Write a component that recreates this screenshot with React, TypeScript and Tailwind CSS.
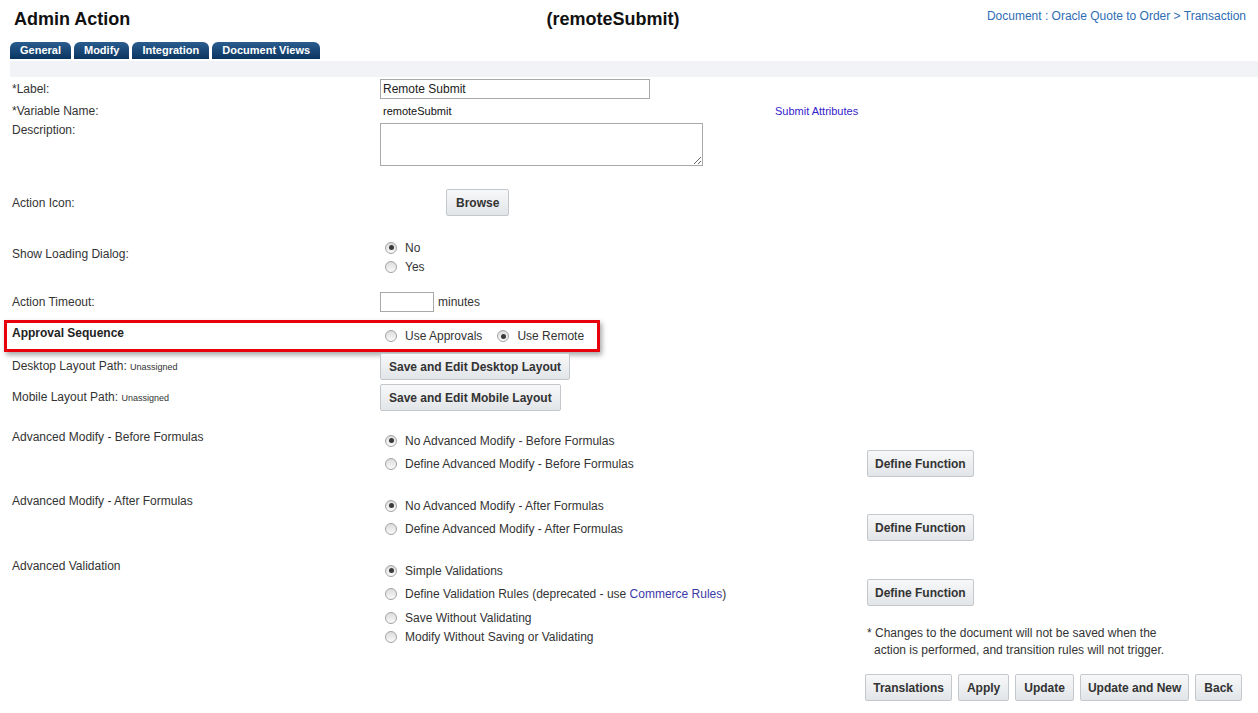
import React from "react";

const tabs = ["General", "Modify", "Integration", "Document Views"];

function Btn({ children, className = "px-[8px]" }: { children: React.ReactNode; className?: string }) {
  return (
    <button
      type="button"
      className={`block h-[27px] rounded-[2px] border border-[#c4c8cd] bg-gradient-to-b from-[#f7f8f9] to-[#e2e5e8] text-[12px] font-bold text-[#333] leading-none whitespace-nowrap ${className}`}
    >
      {children}
    </button>
  );
}

function Radio({ checked, label }: { checked?: boolean; label: React.ReactNode }) {
  return (
    <span className="flex items-center leading-[14px]">
      <span className="ml-[5px] mr-[8px] w-[12px] h-[12px] rounded-full border border-[#a3a3a3] bg-gradient-to-b from-[#dcdcdc] to-[#fafafa] flex items-center justify-center shrink-0">
        {checked && <span className="w-[5px] h-[5px] rounded-full bg-[#3a3a3a]" />}
      </span>
      <span className="text-[12px] text-[#333]">{label}</span>
    </span>
  );
}

function Label({ children, className = "" }: { children: React.ReactNode; className?: string }) {
  return <div className={`pl-[12px] text-[12px] leading-[14px] text-[#333] ${className}`}>{children}</div>;
}

export default function App() {
  return (
    <div className="w-[1258px] h-[713px] bg-white overflow-hidden font-['Liberation_Sans',Arial,sans-serif] text-[#333] leading-[14px]">
      {/* Header */}
      <div className="grid grid-cols-[520px_186px_1fr] h-[42px]">
        <h1 className="pl-[14px] pt-[8px] text-[18px] leading-[22px] font-bold text-[#111]">Admin Action</h1>
        <div className="pt-[8px] text-center text-[18px] leading-[22px] font-bold text-[#111]">(remoteSubmit)</div>
        <div className="pt-[8px] pr-[12px] text-right text-[12px] leading-[16px] text-[#2e6db4]">
          Document : Oracle Quote to Order &gt; Transaction
        </div>
      </div>

      {/* Tabs */}
      <div className="flex gap-[3px] pl-[10px] h-[17px]">
        {tabs.map((t) => (
          <div
            key={t}
            className="px-[10px] rounded-t-[6px] bg-gradient-to-b from-[#2a5d8f] to-[#0a3561] text-white text-[11px] font-bold leading-[17px]"
          >
            {t}
          </div>
        ))}
      </div>
      <div className="ml-[10px] mt-[2px] h-[16px] bg-[#f2f3f7]" />

      {/* Label */}
      <div className="grid grid-cols-[380px_1fr] mt-[2px] items-center">
        <Label>*Label:</Label>
        <div className="flex">
          <input
            defaultValue="Remote Submit"
            className="block w-[270px] h-[20px] border border-[#a9a9a9] px-[2px] text-[12px] text-[#222] outline-none"
          />
        </div>
      </div>

      {/* Variable name */}
      <div className="grid grid-cols-[380px_1fr] mt-[5px] items-center">
        <Label>*Variable Name:</Label>
        <div className="flex text-[11px] leading-[14px]">
          <span className="w-[395px] pl-[3px] text-[#111]">remoteSubmit</span>
          <span className="text-[#3322cc]">Submit Attributes</span>
        </div>
      </div>

      {/* Description */}
      <div className="grid grid-cols-[380px_1fr] mt-[5px]">
        <Label>Description:</Label>
        <div className="flex">
          <textarea className="block w-[323px] h-[43px] border border-[#a9a9a9] outline-none" />
        </div>
      </div>

      {/* Action Icon */}
      <div className="grid grid-cols-[380px_1fr] mt-[23px] items-center">
        <Label>Action Icon:</Label>
        <div className="flex pl-[66px]">
          <Btn className="px-[9px]">Browse</Btn>
        </div>
      </div>

      {/* Show loading dialog */}
      <div className="grid grid-cols-[380px_1fr] mt-[22px]">
        <Label className="pt-[9px]">Show Loading Dialog:</Label>
        <div className="flex flex-col">
          <div className="h-[19px] flex items-center">
            <Radio checked label="No" />
          </div>
          <div className="h-[19px] flex items-center">
            <Radio label="Yes" />
          </div>
        </div>
      </div>

      {/* Action Timeout */}
      <div className="grid grid-cols-[380px_1fr] mt-[16px] items-center">
        <Label>Action Timeout:</Label>
        <div className="flex items-center gap-[4px]">
          <input className="block w-[54px] h-[20px] border border-[#a9a9a9] outline-none" />
          <span className="text-[12px]">minutes</span>
        </div>
      </div>

      {/* Approval Sequence (highlighted) */}
      <div className="ml-[4px] mt-[8px] w-[596px] h-[32px] border-[3px] border-[#e8000b] shadow-[2px_3px_5px_rgba(0,0,0,0.35)] grid grid-cols-[373px_1fr]">
        <div className="pl-[5px] pt-[3px] text-[12px] leading-[14px] font-bold text-[#222]">Approval Sequence</div>
        <div className="pt-[6px] flex items-start gap-[10px]">
          <Radio label="Use Approvals" />
          <Radio checked label="Use Remote" />
        </div>
      </div>

      {/* Desktop layout */}
      <div className="grid grid-cols-[380px_1fr] mt-[1px] items-center">
        <Label>
          Desktop Layout Path: <span className="text-[9px]">Unassigned</span>
        </Label>
        <div className="flex">
          <Btn>Save and Edit Desktop Layout</Btn>
        </div>
      </div>

      {/* Mobile layout */}
      <div className="grid grid-cols-[380px_1fr] mt-[4px] items-center">
        <Label>
          Mobile Layout Path: <span className="text-[9px]">Unassigned</span>
        </Label>
        <div className="flex">
          <Btn>Save and Edit Mobile Layout</Btn>
        </div>
      </div>

      {/* Advanced Modify - Before */}
      <div className="grid grid-cols-[380px_1fr] mt-[18px]">
        <Label className="pt-[1px]">Advanced Modify - Before Formulas</Label>
        <div className="flex">
          <div className="w-[487px] flex flex-col">
            <div className="h-[23px] flex items-center">
              <Radio checked label="No Advanced Modify - Before Formulas" />
            </div>
            <div className="h-[23px] flex items-center">
              <Radio label="Define Advanced Modify - Before Formulas" />
            </div>
          </div>
          <div className="pt-[21px]">
            <Btn className="px-[7px]">Define Function</Btn>
          </div>
        </div>
      </div>

      {/* Advanced Modify - After */}
      <div className="grid grid-cols-[380px_1fr] mt-[17px]">
        <Label>Advanced Modify - After Formulas</Label>
        <div className="flex">
          <div className="w-[487px] flex flex-col">
            <div className="h-[23px] flex items-center">
              <Radio checked label="No Advanced Modify - After Formulas" />
            </div>
            <div className="h-[23px] flex items-center">
              <Radio label="Define Advanced Modify - After Formulas" />
            </div>
          </div>
          <div className="pt-[20px]">
            <Btn className="px-[7px]">Define Function</Btn>
          </div>
        </div>
      </div>

      {/* Advanced Validation */}
      <div className="grid grid-cols-[380px_1fr] mt-[18px]">
        <Label>Advanced Validation</Label>
        <div className="flex">
          <div className="w-[487px] flex flex-col">
            <div className="h-[23px] flex items-center">
              <Radio checked label="Simple Validations" />
            </div>
            <div className="h-[23px] flex items-center">
              <Radio
                label={
                  <>
                    Define Validation Rules (deprecated - use <span className="text-[#3a3aa8]">Commerce Rules</span>)
                  </>
                }
              />
            </div>
            <div className="mt-[3px] h-[19px] flex items-center">
              <Radio label="Save Without Validating" />
            </div>
            <div className="h-[19px] flex items-center">
              <Radio label="Modify Without Saving or Validating" />
            </div>
          </div>
          <div className="pt-[20px]">
            <Btn className="px-[7px]">Define Function</Btn>
            <p className="mt-[19px] pl-[7px] -indent-[7px] text-[12px] leading-[17px] text-[#333]">
              * Changes to the document will not be saved when the
              <br />
              action is performed, and transition rules will not trigger.
            </p>
          </div>
        </div>
      </div>

      {/* Footer buttons */}
      <div className="flex justify-end gap-[6px] pr-[16px] mt-[15px]">
        <Btn className="px-[7px]">Translations</Btn>
        <Btn>Apply</Btn>
        <Btn>Update</Btn>
        <Btn className="px-[7px]">Update and New</Btn>
        <Btn>Back</Btn>
      </div>
    </div>
  );
}
